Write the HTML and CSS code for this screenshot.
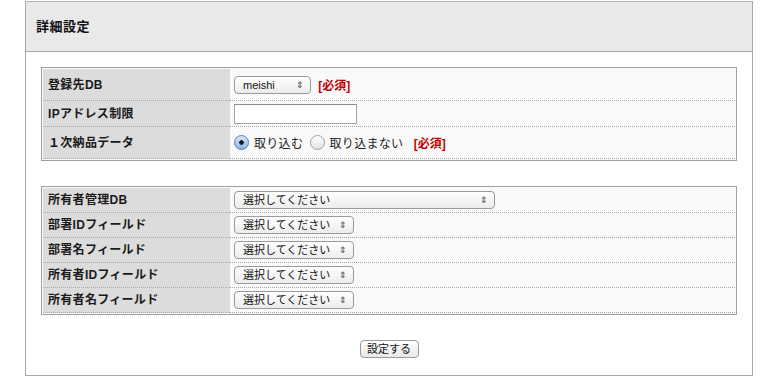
FILE: index.html
```html
<!DOCTYPE html>
<html lang="ja">
<head>
  <meta charset="UTF-8">
  <title>詳細設定</title>
  <link rel="stylesheet" href="styles.css">
</head>
<body>
<div class="panel">
  <div class="panel-header">詳細設定</div>
  <div class="panel-body">

    <table class="form-table">
      <tr class="row-tall">
        <th>登録先DB</th>
        <td>
          <span class="select-wrap w-short">
            <select><option>meishi</option></select>
            <span class="arrow">&#8661;</span>
          </span>
          <span class="required">[必須]</span>
        </td>
      </tr>
      <tr class="row-mid">
        <th>IPアドレス制限</th>
        <td><input type="text" class="text-input"></td>
      </tr>
      <tr class="row-tall">
        <th>１次納品データ</th>
        <td>
          <label class="radio"><input type="radio" name="import" checked> 取り込む</label>
          <label class="radio"><input type="radio" name="import"> 取り込まない</label>
          <span class="required">[必須]</span>
        </td>
      </tr>
    </table>

    <table class="form-table second">
      <tr>
        <th>所有者管理DB</th>
        <td>
          <span class="select-wrap w-long">
            <select><option>選択してください</option></select>
            <span class="arrow">&#8661;</span>
          </span>
        </td>
      </tr>
      <tr>
        <th>部署IDフィールド</th>
        <td>
          <span class="select-wrap w-mid">
            <select><option>選択してください</option></select>
            <span class="arrow">&#8661;</span>
          </span>
        </td>
      </tr>
      <tr>
        <th>部署名フィールド</th>
        <td>
          <span class="select-wrap w-mid">
            <select><option>選択してください</option></select>
            <span class="arrow">&#8661;</span>
          </span>
        </td>
      </tr>
      <tr>
        <th>所有者IDフィールド</th>
        <td>
          <span class="select-wrap w-mid">
            <select><option>選択してください</option></select>
            <span class="arrow">&#8661;</span>
          </span>
        </td>
      </tr>
      <tr>
        <th>所有者名フィールド</th>
        <td>
          <span class="select-wrap w-mid">
            <select><option>選択してください</option></select>
            <span class="arrow">&#8661;</span>
          </span>
        </td>
      </tr>
    </table>

    <div class="actions">
      <button type="submit" class="submit-button">設定する</button>
    </div>
  </div>
</div>
</body>
</html>
```

FILE: styles.css
```css
body {
    margin: 0;
    background: #ffffff;
    font-family: "Liberation Sans", "Noto Sans CJK JP", sans-serif;
    font-size: 12px;
    color: #222;
}
.panel {
    box-sizing: border-box;
    width: 728px;
    height: 375px;
    margin: 1px 0 0 25px;
    border: 1px solid #a8a8a8;
    border-top-color: #b5b5b5;
}
.panel-header {
    height: 49px;
    line-height: 49px;
    padding-left: 10px;
    background: #e9e9e9;
    border-bottom: 1px solid #a8a8a8;
    font-size: 13px;
    font-weight: bold;
    letter-spacing: 0.5px;
    color: #111;
}
.panel-body {
    padding: 15px 15px 0 15px;
}
.form-table {
    width: 696px;
    border: 1px solid #a0a0a0;
    border-collapse: separate;
    border-spacing: 0;
    padding: 1px;
    background: #f9f9f9;
}
.form-table.second {
    margin-top: 25px;
}
.form-table th,
.form-table td {
    border-bottom: 1px dotted #a8a8a8;
    padding: 0;
    vertical-align: middle;
}
.form-table th {
    width: 182px;
    padding-left: 5px;
    text-align: left;
    font-weight: bold;
    letter-spacing: 0.3px;
    color: #1a1a1a;
    background: #dcdcdc;
    line-height: 16px;
}
.form-table td {
    padding-left: 4px;
    background: #f9f9f9;
}
.form-table tr {
    height: 25px;
}
.form-table tr.row-tall {
    height: 32px;
}
.form-table tr.row-mid {
    height: 26px;
}
.select-wrap {
    position: relative;
    display: inline-block;
    vertical-align: middle;
    height: 18px;
}
.select-wrap select {
    -webkit-appearance: none;
    appearance: none;
    box-sizing: border-box;
    width: 100%;
    height: 18px;
    margin: 0;
    padding: 0 0 0 8px;
    border: 1px solid #9a9a9a;
    border-radius: 4px;
    background: linear-gradient(#ffffff, #ececec);
    font-family: "Liberation Sans", "Noto Sans CJK JP", sans-serif;
    font-size: 11px;
    line-height: 16px;
    color: #111;
}
.select-wrap .arrow {
    position: absolute;
    right: 7px;
    top: 3px;
    font-size: 9px;
    line-height: 12px;
    color: #444;
    pointer-events: none;
}
.w-short { width: 77px; }
.w-mid { width: 120px; }
.w-long { width: 261px; }
.required {
    margin-left: 4px;
    color: #c00000;
    font-weight: bold;
    vertical-align: middle;
}
.text-input {
    box-sizing: border-box;
    width: 123px;
    height: 20px;
    margin: 0;
    border: 1px solid #a6a6a6;
    border-top-color: #8e8e8e;
    background: #fff;
    vertical-align: middle;
}
.radio {
    display: inline-flex;
    align-items: center;
    gap: 5px;
    margin-right: 3px;
    vertical-align: middle;
    font-size: 12px;
    letter-spacing: 0.3px;
}
.radio input {
    -webkit-appearance: none;
    appearance: none;
    box-sizing: border-box;
    width: 15px;
    height: 15px;
    margin: 0;
    border: 1px solid #a0a0a0;
    border-radius: 50%;
    background: linear-gradient(#ffffff, #e4e4e4);
}
.radio input:checked {
    border-color: #5b7fb0;
    background: radial-gradient(circle, #1a1a1a 0, #1a1a1a 2px, transparent 2.5px), linear-gradient(#d7e7f8, #8cb5e4);
}
.actions {
    margin-top: 25px;
    text-align: center;
}
.submit-button {
    box-sizing: border-box;
    width: 59px;
    height: 18px;
    padding: 0;
    border: 1px solid #9a9a9a;
    border-radius: 4px;
    background: linear-gradient(#ffffff, #e8e8e8);
    font-family: "Liberation Sans", "Noto Sans CJK JP", sans-serif;
    font-size: 11px;
    line-height: 16px;
    color: #111;
}
```
